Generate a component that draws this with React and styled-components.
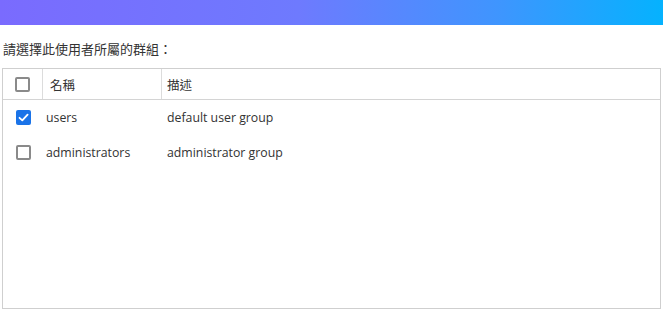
import styled, { createGlobalStyle } from 'styled-components'

const GlobalStyle = createGlobalStyle`
  html, body {
    margin: 0;
    padding: 0;
    background: #fff;
  }
  body {
    font-family: "Segoe UI", "Open Sans", "Noto Sans CJK TC", sans-serif;
    color: #333;
  }
`

const Page = styled.div`
  width: 663px;
  height: 317px;
  display: flex;
  flex-direction: column;
`

const TopBar = styled.div`
  height: 26px;
  background: linear-gradient(90deg, #7a6bfe 0%, #6e7afe 45%, #3f95fe 75%, #05b2fe 100%);
`

const Body = styled.div`
  padding: 15px 2px 8px 2px;
  display: flex;
  flex-direction: column;
  flex: 1;
`

const Prompt = styled.div`
  font-size: 13px;
  line-height: 16px;
  padding-left: 1px;
  padding-top: 1px;
  margin-bottom: 11px;
  font-family: "Noto Sans CJK TC", sans-serif;
`

const Table = styled.div`
  border: 1px solid #cfcfcf;
  height: 241px;
  box-sizing: border-box;
  width: 659px;
`

const Row = styled.div`
  display: grid;
  grid-template-columns: 40px 119px 1fr;
  height: ${(p) => (p.head ? '31px' : '35px')};
  align-items: center;
  border-bottom: ${(p) => (p.head ? '1px solid #d4d4d4' : 'none')};
  box-sizing: border-box;
`

const Cell = styled.div`
  height: 100%;
  display: flex;
  align-items: center;
  padding-left: ${(p) => p.pad || 0}px;
  justify-content: ${(p) => (p.box ? 'center' : 'flex-start')};
  border-right: ${(p) => (p.divide ? '1px solid #dcdcdc' : 'none')};
  font-family: ${(p) => (p.cjk ? '"Noto Sans CJK TC", sans-serif' : '"Open Sans", "Noto Sans", sans-serif')};
  font-size: ${(p) => (p.cjk ? '12.5px' : '12.3px')};
  white-space: nowrap;
`

const Box = styled.span`
  width: 15px;
  height: 15px;
  box-sizing: border-box;
  border-radius: 2px;
  border: ${(p) => (p.on ? 'none' : '2px solid #8a8a8a')};
  background: ${(p) => (p.on ? '#1a73e8' : '#fff')};
  display: flex;
  align-items: center;
  justify-content: center;
  margin-left: 0;
`

function Check({ on }) {
  return (
    <Box on={on ? 1 : 0}>
      {on && (
        <svg width="11" height="11" viewBox="0 0 11 11">
          <path d="M1.5 5.8 L4.3 8.4 L9.6 2.6" fill="none" stroke="#fff" strokeWidth="1.8" strokeLinecap="round" strokeLinejoin="round" />
        </svg>
      )}
    </Box>
  )
}

const groups = [
  { name: 'users', desc: 'default user group', on: true },
  { name: 'administrators', desc: 'administrator group', on: false }
]

function App() {
  return (
    <Page>
      <GlobalStyle />
      <TopBar />
      <Body>
        <Prompt>請選擇此使用者所屬的群組：</Prompt>
        <Table>
          <Row head>
            <Cell box divide>
              <Check />
            </Cell>
            <Cell divide cjk pad={7}>名稱</Cell>
            <Cell cjk pad={5}>描述</Cell>
          </Row>
          {groups.map((g) => (
            <Row key={g.name}>
              <Cell box>
                <Check on={g.on} />
              </Cell>
              <Cell pad={3}>{g.name}</Cell>
              <Cell pad={5}>{g.desc}</Cell>
            </Row>
          ))}
        </Table>
      </Body>
    </Page>
  )
}

export default App
